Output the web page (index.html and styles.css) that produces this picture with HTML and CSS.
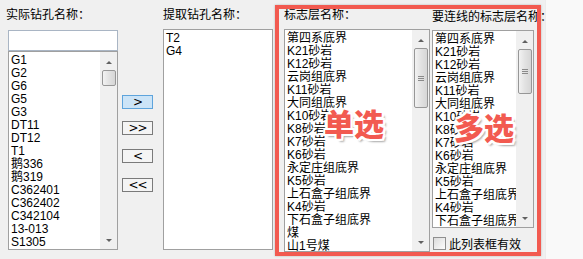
FILE: index.html
```html
<!DOCTYPE html>
<html lang="zh-CN">
<head>
  <meta charset="UTF-8" />
  <title>标志层连线</title>
  <link rel="stylesheet" href="styles.css">
</head>
<body>
  <div class="form">
    <div class="col col-src">
      <div class="label">实际钻孔名称：</div>
      <input class="filter" type="text" />
      <div class="listbox lb-src">
        <ul class="items">
          <li>G1</li><li>G2</li><li>G6</li><li>G5</li><li>G3</li>
          <li>DT11</li><li>DT12</li><li>T1</li><li>鹅336</li><li>鹅319</li>
          <li>C362401</li><li>C362402</li><li>C342104</li><li>13-013</li><li>S1305</li>
        </ul>
        <div class="scroll">
          <span class="arrow up"></span>
          <span class="thumb small"></span>
          <span class="arrow down"></span>
        </div>
      </div>
    </div>

    <div class="col col-btns">
      <button class="move active">&gt;</button>
      <button class="move">&gt;&gt;</button>
      <button class="move">&lt;</button>
      <button class="move">&lt;&lt;</button>
    </div>

    <div class="col col-dst">
      <div class="label">提取钻孔名称：</div>
      <div class="listbox lb-dst">
        <ul class="items">
          <li>T2</li><li>G4</li>
        </ul>
      </div>
    </div>

    <div class="col col-layer">
      <div class="label">标志层名称：</div>
      <div class="listbox lb-layer">
        <ul class="items">
          <li>第四系底界</li><li>K21砂岩</li><li>K12砂岩</li><li>云岗组底界</li>
          <li>K11砂岩</li><li>大同组底界</li><li>K10砂岩</li><li>K8砂岩</li>
          <li>K7砂岩</li><li>K6砂岩</li><li>永定庄组底界</li><li>K5砂岩</li>
          <li>上石盒子组底界</li><li>K4砂岩</li><li>下石盒子组底界</li><li>煤</li>
          <li>山1号煤</li>
        </ul>
        <div class="scroll">
          <span class="arrow up"></span>
          <span class="thumb tall"><i></i></span>
          <span class="arrow down"></span>
        </div>
      </div>
    </div>

    <div class="col col-link">
      <div class="label">要连线的标志层名称：</div>
      <div class="listbox lb-link">
        <ul class="items">
          <li>第四系底界</li><li>K21砂岩</li><li>K12砂岩</li><li>云岗组底界</li>
          <li>K11砂岩</li><li>大同组底界</li><li>K10砂岩</li><li>K8砂岩</li>
          <li>K7砂岩</li><li>K6砂岩</li><li>永定庄组底界</li><li>K5砂岩</li>
          <li>上石盒子组底界</li><li>K4砂岩</li><li>下石盒子组底界</li>
        </ul>
        <div class="scroll">
          <span class="arrow up"></span>
          <span class="thumb mid"><i></i></span>
          <span class="arrow down"></span>
        </div>
      </div>
      <label class="check"><span class="box"></span>此列表框有效</label>
    </div>

    <div class="col col-rest"></div>
  </div>

  <div class="mark"></div>
  <div class="tag tag-single">单选</div>
  <div class="tag tag-multi">多选</div>
</body>
</html>
```

FILE: styles.css
```css
body {
  margin: 0;
  background: #f0f0f0;
  color: #000;
  font-family: "Liberation Sans", "Noto Sans CJK SC", sans-serif;
  font-size: 12px;
  width: 583px;
  height: 259px;
  overflow: hidden;
  position: relative;
}
.form {
  display: flex;
  padding-left: 8px;
  height: 259px;
}
.col {
  display: flex;
  flex-direction: column;
}
.label {
  height: 29px;
  padding-top: 8px;
  box-sizing: border-box;
  line-height: 14px;
  white-space: nowrap;
  font-size: 12px;
}
.col-src {
  width: 110px;
}
.col-src .label {
  margin-left: -2px;
  height: 30px;
}
.filter {
  height: 21px;
  margin: 0;
  padding: 0;
  border: 1px solid #a9b5c4;
  box-sizing: border-box;
  background: #fff;
  outline: none;
}
.listbox {
  position: relative;
  background: #fff;
  border: 1px solid #a0a0a0;
  box-sizing: border-box;
  overflow: hidden;
}
.lb-src { height: 199px; }
.lb-dst { height: 221px; }
.lb-layer { height: 223px; }
.lb-link { height: 198px; }
.items {
  list-style: none;
  margin: 0;
  padding: 2px 0 0 2px;
  line-height: 13px;
  white-space: nowrap;
}
.items li {
  height: 13px;
}
.scroll {
  position: absolute;
  top: 0;
  right: 0;
  bottom: 0;
  width: 17px;
  background: #f0f0f0;
  display: flex;
  flex-direction: column;
  align-items: center;
}
.arrow {
  width: 0;
  height: 0;
  border-left: 3px solid transparent;
  border-right: 3px solid transparent;
}
.arrow.up {
  border-bottom: 3px solid #606060;
  margin-top: 9px;
}
.arrow.down {
  border-top: 3px solid #606060;
  margin-top: auto;
  margin-bottom: 7px;
}
.thumb {
  width: 14px;
  margin-top: 6px;
  border: 1px solid #979797;
  border-radius: 2px;
  box-sizing: border-box;
  background: linear-gradient(to right, #f2f2f2, #e2e2e2 50%, #d6d6d6);
  display: flex;
  align-items: center;
  justify-content: center;
}
.thumb.small { height: 16px; }
.thumb.tall { height: 60px; }
.thumb.mid { height: 45px; }
.thumb i {
  width: 6px;
  height: 5px;
  border-top: 1px solid #8a8a8a;
  border-bottom: 1px solid #8a8a8a;
  box-sizing: border-box;
  position: relative;
}
.thumb i::after {
  content: "";
  position: absolute;
  left: 0;
  right: 0;
  top: 1px;
  border-top: 1px solid #8a8a8a;
}
.col-btns {
  width: 31px;
  margin-left: 4px;
  padding-top: 95px;
  align-items: stretch;
}
.move {
  height: 14px;
  margin: 0 0 12px;
  padding: 0;
  border: 1px solid #7a7a7a;
  background: #f4f4f4;
  font-family: "DejaVu Sans", sans-serif;
  font-size: 12px;
  line-height: 11px;
  color: #000;
  letter-spacing: -1px;
}
.move:nth-child(3) { margin-top: 2px; margin-bottom: 15px; }
.move.active {
  background: #cce4f7;
  border-color: #5ea4dc;
}
.col-dst {
  width: 110px;
  margin-left: 10px;
}
.col-layer {
  width: 146px;
  margin-left: 11px;
}
.col-link {
  width: 102px;
  margin-left: 2px;
}
.col-link .label {
  padding-top: 10px;
  height: 30px;
}
.check {
  display: flex;
  align-items: center;
  margin-top: 7px;
  margin-left: 1px;
  font-size: 12px;
  white-space: nowrap;
}
.check .box {
  width: 13px;
  height: 13px;
  border: 1px solid #8f8f8f;
  box-sizing: border-box;
  background: linear-gradient(135deg, #dcdcdc, #fdfdfd);
  margin-right: 3px;
}
.col-rest {
  flex: 1;
  margin-left: 11px;
  background: #f9f9f9;
  border-left: 1px solid #ececec;
}
.mark {
  position: absolute;
  left: 275px;
  top: 5px;
  width: 266px;
  height: 251px;
  border: 4px solid #f25a50;
  box-sizing: border-box;
  box-shadow: 0 0 2px rgba(0, 0, 0, 0.25);
}
.tag {
  position: absolute;
  font-family: "Noto Sans CJK SC", sans-serif;
  font-weight: 900;
  font-size: 30px;
  line-height: 34px;
  color: #f25a50;
  text-shadow:
    2px 0 0 #fff, -2px 0 0 #fff, 0 2px 0 #fff, 0 -2px 0 #fff,
    2px 2px 0 #fff, -2px -2px 0 #fff, 2px -2px 0 #fff, -2px 2px 0 #fff,
    3px 3px 2px rgba(0, 0, 0, 0.35);
}
.tag-single {
  left: 324px;
  top: 105px;
}
.tag-multi {
  left: 454px;
  top: 109px;
}
```
